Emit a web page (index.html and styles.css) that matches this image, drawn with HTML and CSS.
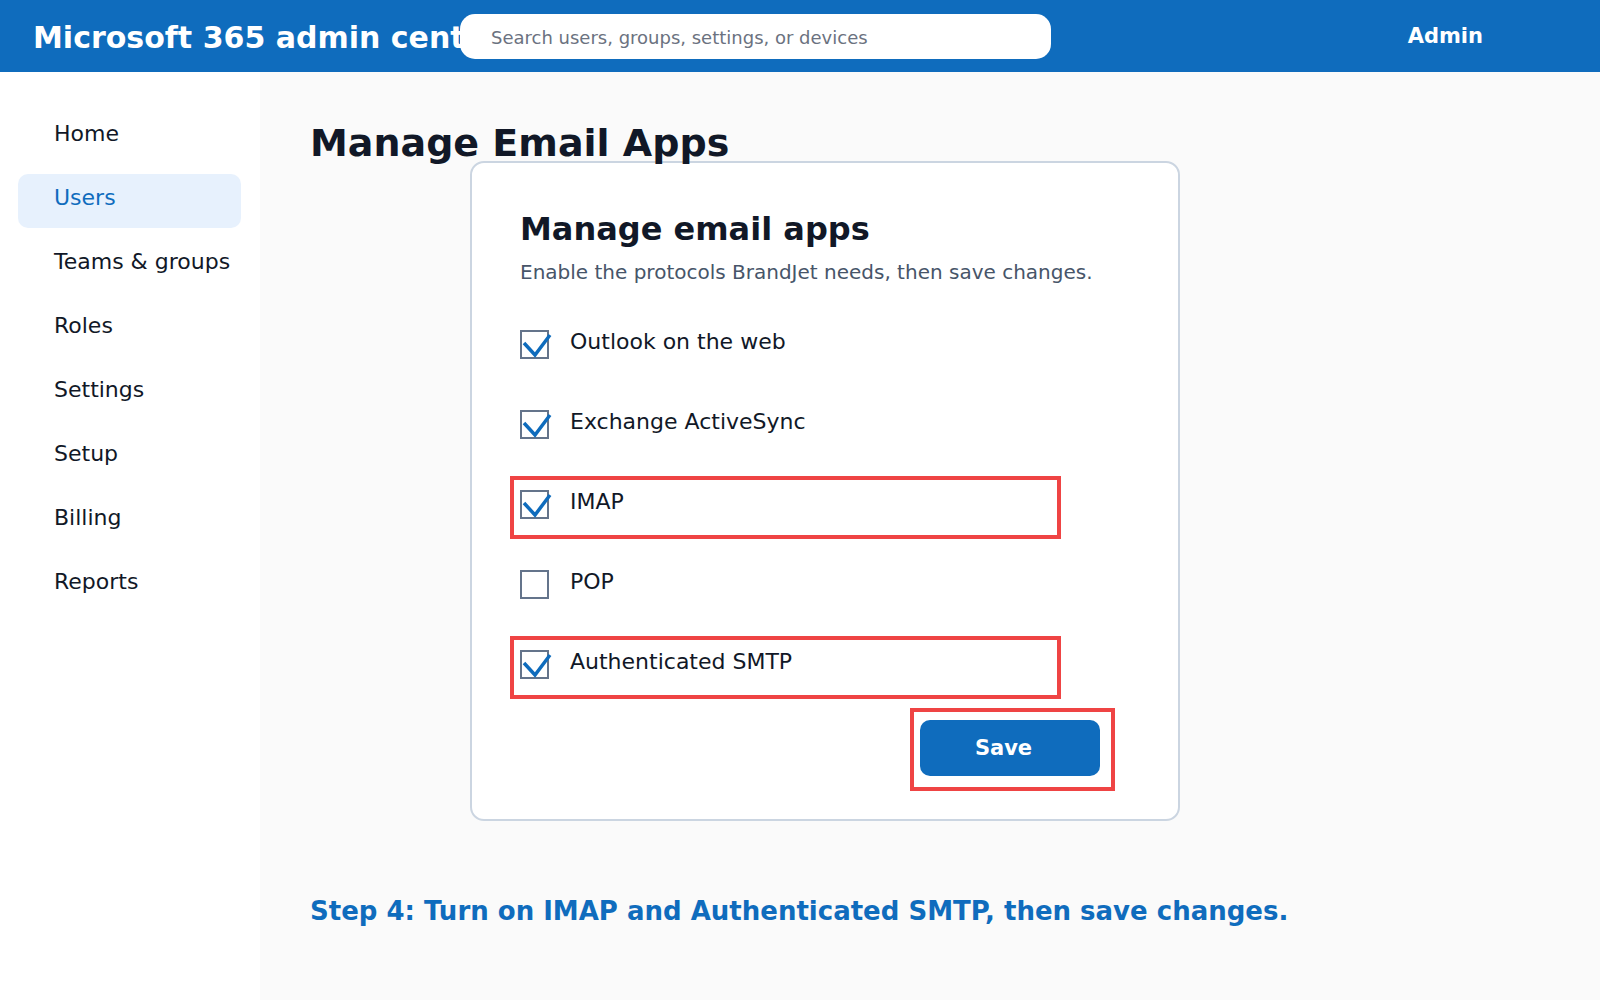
FILE: index.html
```html
<!DOCTYPE html>
<html lang="en">
<head>
    <meta charset="UTF-8">
    <meta name="viewport" content="width=device-width, initial-scale=1.0">
    <title>Manage Email Apps - Microsoft 365 admin center</title>
    <link rel="stylesheet" href="styles.css">
</head>
<body>
    <header class="topbar">
        <div class="brand">Microsoft 365 admin center</div>
        <div class="search">Search users, groups, settings, or devices</div>
        <div class="account">Admin</div>
    </header>

    <div class="layout">
        <nav class="sidebar">
            <a class="nav-item" href="#">Home</a>
            <a class="nav-item active" href="#">Users</a>
            <a class="nav-item" href="#">Teams &amp; groups</a>
            <a class="nav-item" href="#">Roles</a>
            <a class="nav-item" href="#">Settings</a>
            <a class="nav-item" href="#">Setup</a>
            <a class="nav-item" href="#">Billing</a>
            <a class="nav-item" href="#">Reports</a>
        </nav>

        <main class="main">
            <div class="content">
                <h1 class="page-title">Manage Email Apps</h1>

                <section class="card">
                    <h2>Manage email apps</h2>
                    <p class="card-sub">Enable the protocols BrandJet needs, then save changes.</p>

                    <div class="options">
                        <div class="option">
                            <span class="box checked">
                                <svg viewBox="0 0 29 29"><polyline points="4,13 15,25 30,5"/></svg>
                            </span>
                            <span class="option-text">Outlook on the web</span>
                        </div>
                        <div class="option">
                            <span class="box checked">
                                <svg viewBox="0 0 29 29"><polyline points="4,13 15,25 30,5"/></svg>
                            </span>
                            <span class="option-text">Exchange ActiveSync</span>
                        </div>
                        <div class="option highlight">
                            <span class="box checked">
                                <svg viewBox="0 0 29 29"><polyline points="4,13 15,25 30,5"/></svg>
                            </span>
                            <span class="option-text">IMAP</span>
                        </div>
                        <div class="option">
                            <span class="box"></span>
                            <span class="option-text">POP</span>
                        </div>
                        <div class="option highlight">
                            <span class="box checked">
                                <svg viewBox="0 0 29 29"><polyline points="4,13 15,25 30,5"/></svg>
                            </span>
                            <span class="option-text">Authenticated SMTP</span>
                        </div>
                    </div>

                    <div class="actions">
                        <span class="save-wrap">
                            <button class="save">Save</button>
                        </span>
                    </div>
                </section>

                <p class="step">Step 4: Turn on IMAP and Authenticated SMTP, then save changes.</p>
            </div>
        </main>
    </div>
</body>
</html>
```

FILE: styles.css
```css
*, *::before, *::after {
    box-sizing: border-box;
}
body {
    font-family: "DejaVu Sans", Verdana, sans-serif;
    margin: 0;
    min-height: 100vh;
    display: flex;
    flex-direction: column;
    color: #111827;
    background-color: #fafafa;
}
.topbar {
    height: 72px;
    background-color: #0f6cbd;
    color: white;
    display: flex;
    align-items: center;
    flex-shrink: 0;
}
.brand {
    width: 460px;
    padding: 2px 0 0 33px;
    font-size: 30px;
    font-weight: bold;
    white-space: nowrap;
}
.search {
    width: 591px;
    height: 45px;
    margin-top: 1px;
    background-color: white;
    border-radius: 15px;
    padding: 2px 0 0 31px;
    display: flex;
    align-items: center;
    font-size: 18px;
    color: #6b7280;
}
.account {
    margin-left: auto;
    padding-right: 117px;
    font-size: 21px;
    font-weight: bold;
}
.layout {
    flex: 1;
    display: flex;
}
.sidebar {
    width: 260px;
    flex-shrink: 0;
    background-color: white;
    padding: 38px 19px 0 18px;
    display: flex;
    flex-direction: column;
    gap: 10px;
}
.nav-item {
    height: 54px;
    padding: 0 0 8px 36px;
    display: flex;
    align-items: center;
    border-radius: 10px;
    font-size: 22px;
    white-space: nowrap;
    color: #111827;
    text-decoration: none;
}
.nav-item.active {
    background-color: #e7f1fd;
    color: #0f6cbd;
}
.main {
    flex: 1;
    padding: 51px 50px 40px;
}
.content {
    width: 1030px;
}
.page-title {
    margin: 0;
    font-size: 38px;
    line-height: 40px;
    font-weight: bold;
}
.card {
    width: 710px;
    margin: -2px auto 0;
    background-color: white;
    border: 2px solid #cbd5e1;
    border-radius: 14px;
    padding: 46px 48px 43px;
}
.card h2 {
    margin: 0 0 9px;
    font-size: 32px;
    line-height: 40px;
}
.card-sub {
    margin: 0;
    font-size: 20px;
    line-height: 28px;
    color: #475569;
}
.options {
    margin-top: 44px;
    display: flex;
    flex-direction: column;
    gap: 51px;
}
.option {
    position: relative;
    display: flex;
    align-items: flex-start;
    gap: 21px;
}
.option.highlight::after {
    content: '';
    position: absolute;
    left: -10px;
    top: -14px;
    width: 551px;
    height: 63px;
    border: 4px solid #ef4444;
}
.box {
    position: relative;
    width: 29px;
    height: 29px;
    border: 2px solid #64748b;
    flex-shrink: 0;
}
.box svg {
    position: absolute;
    left: -2px;
    top: -2px;
    width: 29px;
    height: 29px;
    overflow: visible;
}
.box polyline {
    fill: none;
    stroke: #0f6cbd;
    stroke-width: 3.5;
}
.option-text {
    font-size: 22px;
    line-height: 24px;
}
.actions {
    margin-top: 41px;
    display: flex;
    justify-content: flex-end;
    padding-right: 30px;
}
.save-wrap {
    position: relative;
    display: flex;
}
.save-wrap::after {
    content: '';
    position: absolute;
    left: -10px;
    top: -12px;
    right: -15px;
    bottom: -15px;
    border: 4px solid #ef4444;
}
.save {
    width: 180px;
    height: 56px;
    padding: 0 13px 0 0;
    background-color: #0f6cbd;
    color: white;
    border: none;
    border-radius: 10px;
    font-family: inherit;
    font-size: 21px;
    font-weight: bold;
    cursor: pointer;
}
.step {
    margin: 74px 0 0;
    font-size: 26px;
    line-height: 32px;
    font-weight: bold;
    color: #0f6cbd;
}
```
